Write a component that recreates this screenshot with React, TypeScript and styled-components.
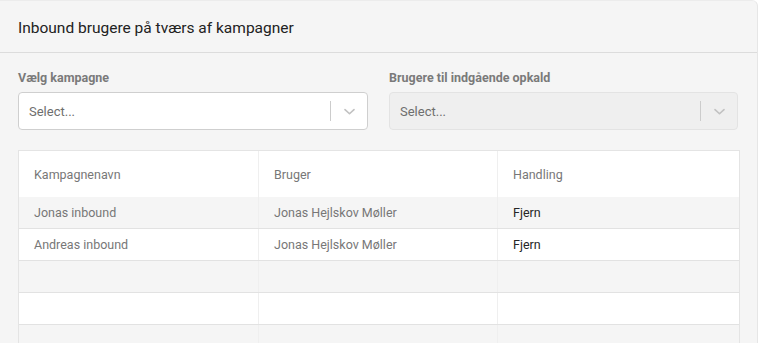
import React from 'react'
import styled, { createGlobalStyle } from 'styled-components'

const GlobalStyle = createGlobalStyle`
	body {
		margin: 0;
		background: #ffffff;
		font-family: Roboto, "Noto Sans", sans-serif;
	}
`

const Card = styled.div`
	width: 758px;
	height: 343px;
	box-sizing: border-box;
	background: #f5f5f5;
	border-top: 1px solid #ececec;
	border-right: 1px solid #e6e6e6;
	border-top-right-radius: 6px;
	overflow: hidden;
`

const CardHeader = styled.div`
	height: 52px;
	box-sizing: border-box;
	display: flex;
	align-items: center;
	padding: 2px 18px 0 18px;
	border-bottom: 1px solid #dcdcdc;
	font-size: 15.5px;
	color: #222;
`

const CardBody = styled.div`
	padding: 17px 18px 0 18px;
`

const FilterRow = styled.div`
	display: grid;
	grid-template-columns: 350px 349px;
	column-gap: 21px;
`

const Field = styled.div`
	display: flex;
	flex-direction: column;
`

const Label = styled.label`
	font-size: 12.5px;
	font-weight: 700;
	color: #7a7a7a;
	height: 17px;
	margin-bottom: 5px;
`

const SelectBox = styled.div<{ disabled?: boolean }>`
	height: 38px;
	box-sizing: border-box;
	border: 1px solid ${p => (p.disabled ? '#e3e3e3' : '#cfcfcf')};
	border-radius: 4px;
	background: ${p => (p.disabled ? '#efefef' : '#ffffff')};
	display: flex;
	align-items: center;
`

const Placeholder = styled.span`
	flex: 1;
	padding-left: 10px;
	font-size: 13px;
	color: #6e6e6e;
`

const Separator = styled.span`
	width: 1px;
	height: 20px;
	background: #cccccc;
`

const Arrow = styled.span`
	width: 36px;
	display: flex;
	justify-content: center;
	align-items: center;
`

const Table = styled.div`
	margin-top: 20px;
	width: 720px;
	border: 1px solid #e4e4e4;
	border-bottom: none;
	background: #ffffff;
`

const Row = styled.div<{ shaded?: boolean; head?: boolean }>`
	display: grid;
	grid-template-columns: 240px 239px 1fr;
	height: ${p => (p.head ? '46px' : '31px')};
	background: ${p => (p.shaded ? '#f5f5f5' : '#ffffff')};
	border-bottom: ${p => (p.head ? 'none' : '1px solid #e2e2e2')};
`

const Cell = styled.div<{ dark?: boolean }>`
	display: flex;
	align-items: center;
	padding-left: 15px;
	font-size: 12.5px;
	color: ${p => (p.dark ? '#262626' : '#777777')};
	border-right: 1px solid #efefef;
	&:last-child {
		border-right: none;
	}
`

const Chevron = () => (
	<svg width="15" height="15" viewBox="0 0 20 20">
		<path
			d="M4 7.5 L10 13 L16 7.5"
			fill="none"
			stroke="#c2c2c2"
			strokeWidth="2.2"
			strokeLinecap="round"
			strokeLinejoin="round"
		/>
	</svg>
)

interface ISelectProps {
	disabled?: boolean
}

const Select: React.FC<ISelectProps> = ({ disabled }) => (
	<SelectBox disabled={disabled}>
		<Placeholder>Select...</Placeholder>
		<Separator />
		<Arrow>
			<Chevron />
		</Arrow>
	</SelectBox>
)

const rows = [
	{ campaign: 'Jonas inbound', user: 'Jonas Hejlskov Møller', action: 'Fjern' },
	{ campaign: 'Andreas inbound', user: 'Jonas Hejlskov Møller', action: 'Fjern' },
	{ campaign: '', user: '', action: '' },
	{ campaign: '', user: '', action: '' },
	{ campaign: '', user: '', action: '' },
]

const App: React.FC = () => {
	return (
		<>
			<GlobalStyle />
			<Card>
				<CardHeader>Inbound brugere på tværs af kampagner</CardHeader>
				<CardBody>
					<FilterRow>
						<Field>
							<Label>Vælg kampagne</Label>
							<Select />
						</Field>
						<Field>
							<Label>Brugere til indgående opkald</Label>
							<Select disabled />
						</Field>
					</FilterRow>
					<Table>
						<Row head>
							<Cell>Kampagnenavn</Cell>
							<Cell>Bruger</Cell>
							<Cell>Handling</Cell>
						</Row>
						{rows.map((r, i) => (
							<Row key={i} shaded={i % 2 === 0}>
								<Cell>{r.campaign}</Cell>
								<Cell>{r.user}</Cell>
								<Cell dark>{r.action}</Cell>
							</Row>
						))}
					</Table>
				</CardBody>
			</Card>
		</>
	)
}

export default App
